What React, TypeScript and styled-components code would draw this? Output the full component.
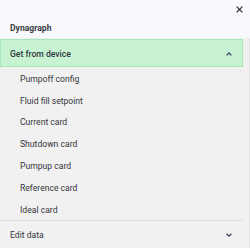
import React from "react";
import styled, { createGlobalStyle } from "styled-components";

const Global = createGlobalStyle`
  html, body { margin: 0; padding: 0; }
  body { font-family: Roboto, "Liberation Sans", Arial, sans-serif; }
`;

const Root = styled.div`
  width: 250px;
  height: 248px;
  display: flex;
  flex-direction: column;
  background: #f1f1f1;
  overflow: hidden;
`;

const TopBar = styled.div`
  height: 40px;
  box-sizing: border-box;
  background: #f7f9fc;
  display: flex;
  flex-direction: column;
  border-bottom: 1px solid #eceef0;
`;

const CloseRow = styled.div`
  height: 18px;
  box-sizing: border-box;
  padding: 1px 6px 0 0;
  display: flex;
  justify-content: flex-end;
  align-items: center;
`;

const CloseButton = styled.button`
  border: 0;
  background: none;
  padding: 0;
  width: 9px;
  height: 9px;
  display: flex;
  align-items: center;
  justify-content: center;
  cursor: pointer;
`;

const Title = styled.div`
  height: 20px;
  line-height: 20px;
  padding-left: 10px;
  font-size: 8.6px;
  font-weight: 700;
  color: #3b3d45;
`;

const Panel = styled.div`
  flex: 1;
  display: flex;
  flex-direction: column;
  border-right: 1px solid #e2e2e2;
`;

const SectionHeader = styled.div<{ $open?: boolean }>`
  height: 28px;
  box-sizing: border-box;
  margin-right: 6px;
  display: flex;
  align-items: center;
  justify-content: space-between;
  padding: 1px 10px 0 9px;
  background: ${(p) => (p.$open ? "#c7f3d3" : "transparent")};
  border: 1px solid ${(p) => (p.$open ? "#a9e6bc" : "transparent")};
  border-top-color: ${(p) => (p.$open ? "#a9e6bc" : "#dcdcdc")};
`;

const HeaderLabel = styled.span<{ $strong?: boolean }>`
  font-size: 8.6px;
  font-weight: ${(p) => (p.$strong ? 500 : 400)};
  color: #33363d;
`;

const ItemList = styled.div`
  display: flex;
  flex-direction: column;
`;

const Item = styled.div`
  height: 21.8px;
  display: flex;
  align-items: center;
  padding: 1px 0 0 20px;
  box-sizing: border-box;
  font-size: 8.6px;
  color: #34363b;
`;

const Chevron = ({ up }: { up?: boolean }) => (
  <svg width="6" height="4" viewBox="0 0 6 4">
    <polyline
      points={up ? "0.6,3.4 3,1 5.4,3.4" : "0.6,0.8 3,3.2 5.4,0.8"}
      fill="none"
      stroke="#404663"
      strokeWidth="1.3"
    />
  </svg>
);

const items = [
  "Pumpoff config",
  "Fluid fill setpoint",
  "Current card",
  "Shutdown card",
  "Pumpup card",
  "Reference card",
  "Ideal card",
];

export default function App() {
  return (
    <>
      <Global />
      <Root>
        <TopBar>
          <CloseRow>
            <CloseButton aria-label="Close">
              <svg width="7" height="7" viewBox="0 0 7 7">
                <path d="M0.6 0.6 L6.4 6.4 M6.4 0.6 L0.6 6.4" stroke="#2e2f33" strokeWidth="1.3" />
              </svg>
            </CloseButton>
          </CloseRow>
          <Title>Dynagraph</Title>
        </TopBar>
        <Panel>
          <SectionHeader $open>
            <HeaderLabel $strong>Get from device</HeaderLabel>
            <Chevron up />
          </SectionHeader>
          <ItemList>
            {items.map((t) => (
              <Item key={t}>{t}</Item>
            ))}
          </ItemList>
          <SectionHeader>
            <HeaderLabel>Edit data</HeaderLabel>
            <Chevron />
          </SectionHeader>
        </Panel>
      </Root>
    </>
  );
}
